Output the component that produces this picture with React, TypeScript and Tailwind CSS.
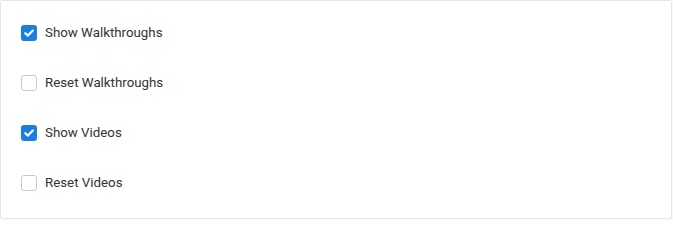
import React, { useState } from "react";

function Row({ label, checked, onToggle }: { label: string; checked: boolean; onToggle: () => void }) {
  return (
    <label className="flex items-center h-[50px] px-5 gap-2 cursor-pointer select-none" onClick={onToggle}>
      {checked ? (
        <span className="w-4 h-4 rounded-[3px] bg-[#1a7fe0] flex items-center justify-center">
          <svg width="12" height="12" viewBox="0 0 12 12" fill="none">
            <path d="M2.3 6.2 L4.9 8.6 L9.8 3.6" stroke="white" strokeWidth="2.2" strokeLinecap="round" strokeLinejoin="round" />
          </svg>
        </span>
      ) : (
        <span className="w-4 h-4 rounded-[3px] border border-[#c9c9c9] bg-white" />
      )}
      <span className="text-[13.3px] text-[#333333] leading-none">{label}</span>
    </label>
  );
}

export default function App() {
  const [state, setState] = useState([true, false, true, false]);
  const labels = ["Show Walkthroughs", "Reset Walkthroughs", "Show Videos", "Reset Videos"];
  return (
    <div className="bg-[#fafafa] w-[673px] h-[220px]" style={{ fontFamily: "Roboto, 'Liberation Sans', sans-serif" }}>
      <div className="w-[672px] h-[219px] bg-white border border-[#e6e6e6] rounded-[2px] pt-[7px] pb-[10px] flex flex-col">
        {labels.map((l, i) => (
          <Row
            key={l}
            label={l}
            checked={state[i]}
            onToggle={() => setState((s) => s.map((v, j) => (j === i ? !v : v)))}
          />
        ))}
      </div>
    </div>
  );
}
